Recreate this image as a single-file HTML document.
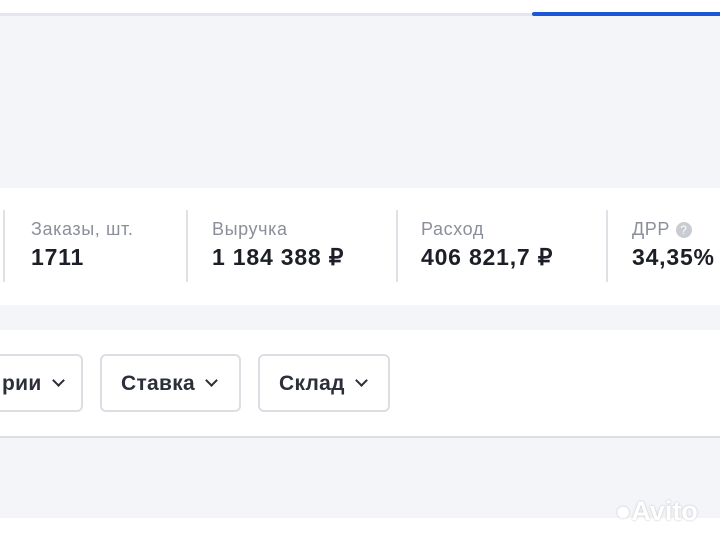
<!DOCTYPE html>
<html><head><meta charset="utf-8"><style>
body{margin:0;width:720px;height:539px;overflow:hidden;background:#fff;font-family:"Liberation Sans",sans-serif;position:relative}
.a{position:absolute}
.lbl{font-size:18px;color:#8a8f99;letter-spacing:0.6px}
.val{font-size:23px;font-weight:bold;color:#1c1f26;letter-spacing:0.8px}
.div{width:2px;height:72px;background:#dfe1e6;top:210px}
.btn{top:354px;height:58px;border:2px solid #dcdee3;border-radius:6px;box-sizing:border-box;font-size:21px;font-weight:bold;color:#2b2f38;line-height:56px;letter-spacing:0.3px}
.ch{display:inline-block;width:7px;height:7px;border-right:2.5px solid #2b2f38;border-bottom:2.5px solid #2b2f38;transform:rotate(45deg);margin-left:12px;position:relative;top:-5px}
</style></head><body>
<div class="a" style="top:13px;left:0;width:720px;height:3px;background:#e3e6ec"></div>
<div class="a" style="top:12px;left:532px;width:188px;height:4px;background:#1a56d6;border-radius:2px 0 0 2px"></div>
<div class="a" style="top:16px;left:0;width:720px;height:172px;background:#f4f5f9"></div>
<div class="a" style="top:305px;left:0;width:720px;height:25px;background:#f4f5f9"></div>
<div class="a" style="top:436px;left:0;width:720px;height:2px;background:#dcdfe5"></div>
<div class="a" style="top:438px;left:0;width:720px;height:80px;background:#f4f5f9"></div>
<div class="a div" style="left:3px"></div>
<div class="a div" style="left:186px"></div>
<div class="a div" style="left:396px"></div>
<div class="a div" style="left:606px"></div>
<div class="a lbl" style="left:31px;top:219px">Заказы, шт.</div>
<div class="a val" style="left:31px;top:244px">1711</div>
<div class="a lbl" style="left:212px;top:219px">Выручка</div>
<div class="a val" style="left:212px;top:244px">1 184 388 ₽</div>
<div class="a lbl" style="left:421px;top:219px">Расход</div>
<div class="a val" style="left:421px;top:244px">406 821,7 ₽</div>
<div class="a lbl" style="left:632px;top:219px">ДРР <span style="display:inline-block;width:16px;height:16px;border-radius:50%;background:#c9ccd3;color:#fff;font-size:12px;text-align:center;line-height:16px;vertical-align:1px;letter-spacing:0">?</span></div>
<div class="a val" style="left:632px;top:244px">34,35%</div>
<div class="a btn" style="left:-10px;width:93px;padding-left:10px">рии<span class="ch"></span></div>
<div class="a btn" style="left:100px;width:141px;padding-left:19px">Ставка<span class="ch"></span></div>
<div class="a btn" style="left:258px;width:132px;padding-left:19px">Склад<span class="ch"></span></div>
<div class="a" style="left:615px;top:496px;font-size:27px;font-weight:bold;color:#fff;text-shadow:0 0 2px #bbb">●Avito</div>
</body></html>
